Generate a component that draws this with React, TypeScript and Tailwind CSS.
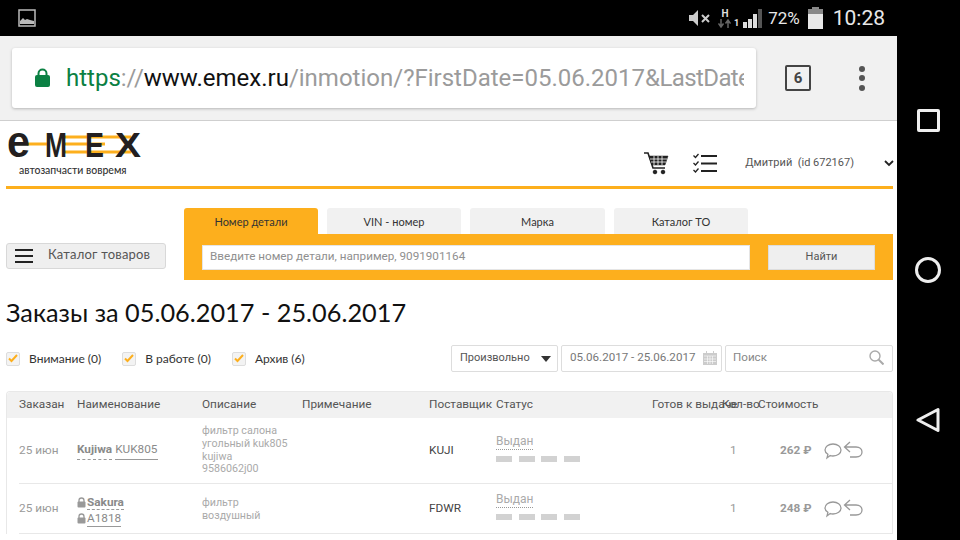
const roboto = "font-['Roboto','Liberation_Sans',sans-serif]";
const gill = "font-['Lato','Noto_Sans',sans-serif]";
const cols = 'grid grid-cols-[58px_125px_100px_127px_67px_156px_70px_36px_135px]';

const orders = [
	{ supplier: 'KUJI', price: '262 ₽', h: 'h-[66px]' },
	{ supplier: 'FDWR', price: '248 ₽', h: 'h-[50px]' },
];

const Logo = () => (
	<div className="relative h-[52px] w-[136px]">
		<svg width="136" height="28" viewBox="0 0 136 28" className="block overflow-visible">
			<g fill="#fdaf1d">
				<rect x="20" y="10.500" width="20" height="3" />
				<rect x="58" y="3.500" width="66" height="3" />
				<rect x="58" y="10.500" width="40" height="3" />
				<rect x="58" y="18.500" width="66" height="3" />
			</g>
			<g fill="#231f20" fontFamily="'Liberation Sans', sans-serif" fontWeight="700">
				<text x="0" y="25" fontSize="44" textLength="23" lengthAdjust="spacingAndGlyphs">e</text>
				<text x="38" y="25" fontSize="35" textLength="22" lengthAdjust="spacingAndGlyphs">M</text>
				<text x="78" y="25" fontSize="35" textLength="19" lengthAdjust="spacingAndGlyphs">E</text>
				<text x="108" y="25" fontSize="35" textLength="26" lengthAdjust="spacingAndGlyphs">X</text>
			</g>
		</svg>
		<div className={`${gill} mt-[3px] ml-[12px] text-[10.500px] leading-[14px] font-medium text-[#333]`}>автозапчасти вовремя</div>
	</div>
);

const Cart = () => (
	<svg width="26" height="24" viewBox="0 0 26 24" fill="none" stroke="#222">
		<path d="M1 2h4l5 15h12" strokeWidth="1.600" />
		<path d="M6 5h19l-3 9H9z" fill="#222" strokeWidth="0.500" />
		<path d="M7 8h17M8 11h15M11 5v9M15 5v9M19 5v9" stroke="#fff" strokeWidth="0.800" />
		<circle cx="12" cy="21" r="1.800" fill="#222" />
		<circle cx="20" cy="21" r="1.800" fill="#222" />
	</svg>
);

const CheckList = () => (
	<svg width="25" height="20" viewBox="0 0 25 20" fill="none" stroke="#222" strokeWidth="2">
		<path d="M0.500 2.500l2 2 3-3.500M0.500 10l2 2 3-3.500M0.500 17l2 2 3-3.500" strokeWidth="1.300" />
		<path d="M8 3h16M8 10.500h16M8 18h16" />
	</svg>
);

const CheckBox = ({ label, gap }: { label: string; gap: string }) => (
	<div className={`flex items-center ${gap}`}>
		<div className="flex h-[14px] w-[14px] items-center justify-center rounded-[2px] border border-[#ddd] bg-[#f3f3f3]">
			<svg width="10" height="9" viewBox="0 0 10 9" fill="none" stroke="#fdaf1d" strokeWidth="2">
				<path d="M1 4.500l2.500 2.500L9 1" />
			</svg>
		</div>
		<span className={`${gill} ml-[9px] text-[12px] leading-4 text-[#333]`}>{label}</span>
	</div>
);

const Lock = () => (
	<svg width="9" height="11" viewBox="0 0 9 11" className="mr-[1px] shrink-0">
		<path d="M2 5V3.500a2.500 2.500 0 0 1 5 0V5" fill="none" stroke="#999" strokeWidth="1.300" />
		<rect x="0.500" y="4.500" width="8" height="6" rx="1" fill="#999" />
	</svg>
);

const Row = ({ order, index }: { order: (typeof orders)[number]; index: number }) => (
	<div className={`${cols} ${order.h} items-center border-b border-[#e8e8e8] text-[11.800px] text-[#9a9a9a]`}>
		<div>25 июн</div>
		{index === 0 ? (
			<div className="flex gap-[3px] text-[#8a8a8a]">
				<span className="border-b border-dashed border-[#999] font-bold">Kujiwa</span>
				<span className="border-b border-[#999]">KUK805</span>
			</div>
		) : (
			<div className="pt-[4px] text-[#8a8a8a]">
				<div className="flex items-center leading-[14px]">
					<Lock />
					<span className="border-b border-dashed border-[#999] font-bold">Sakura</span>
				</div>
				<div className="mt-[1px] flex items-center leading-[15px]">
					<Lock />
					<span className="border-b border-[#999]">A1818</span>
				</div>
			</div>
		)}
		{index === 0 ? (
			<div className="text-[10.700px] leading-[12.700px] text-[#aaa]">
				фильтр салона
				<br />
				угольный kuk805
				<br />
				kujiwa
				<br />
				9586062j00
			</div>
		) : (
			<div className="text-[10.700px] leading-[13px] text-[#aaa]">
				фильтр
				<br />
				воздушный
			</div>
		)}
		<div />
		<div className="text-[#444]">{order.supplier}</div>
		<div className="mb-[5px]">
			<div className="w-fit border-b border-dotted border-[#999] text-[12px] leading-[15px] text-[#aaa]">Выдан</div>
			<div className="mt-[6px] flex gap-[6.500px]">
				<div className="h-[6px] w-[16px] bg-[#d2d2d2]" />
				<div className="h-[6px] w-[16px] bg-[#d2d2d2]" />
				<div className="h-[6px] w-[16px] bg-[#d2d2d2]" />
				<div className="h-[6px] w-[16px] bg-[#d2d2d2]" />
			</div>
		</div>
		<div />
		<div className="pl-[8px]">1</div>
		<div className="flex items-center pl-[22px]">
			<span className="w-[44px] font-bold text-[#999]">{order.price}</span>
			<svg width="40" height="20" viewBox="0 0 40 20" fill="none" stroke="#999" strokeWidth="1.300">
				<path d="M9 3c4.500 0 8 2.500 8 6s-3.500 6-8 6c-1 0-2-.1-2.800-.4L3 17l.9-3.700C2.200 12.200 1 10.700 1 9c0-3.500 3.500-6 8-6z" />
				<path d="M26 1l-5.500 5 5.500 5M20.500 6H32c4 0 6 2.500 6 5s-2 5-6 5h-6" />
			</svg>
		</div>
	</div>
);

export default function App() {
	return (
		<div className={`${roboto} flex h-[540px] w-[960px] overflow-hidden bg-black`}>
			<div className="flex w-[897px] flex-col">
				{/* status bar */}
				<div className="flex h-[36px] shrink-0 items-center bg-black">
					<svg width="18" height="18" viewBox="0 0 18 18" className="ml-[18px]" fill="none">
						<rect x="1" y="1" width="16" height="16" stroke="#bbb" strokeWidth="1.500" />
						<path d="M2 15v-3l3-3 2 2 2-1 3 1 4 1v3z" fill="#bbb" />
					</svg>
					<div className="ml-auto flex items-center pr-[12px] text-[#e8e8e8]">
						<svg width="23" height="18" viewBox="0 0 23 18" fill="#ccc">
							<path d="M0 6h4l5-5v16l-5-5H0z" />
							<path d="M13 6l7 7M20 6l-7 7" stroke="#ccc" strokeWidth="2" />
						</svg>
						<div className="ml-[6px] flex w-[14px] flex-col items-center">
							<span className="text-[10px] leading-[11px] font-bold text-[#ddd]">H</span>
							<svg width="13" height="9" viewBox="0 0 13 9" fill="none" stroke="#666" strokeWidth="1.500">
								<path d="M3 0v7M0.500 4.500L3 8l2.500-3.500M10 9V2M7.500 4.500L10 1l2.500 3.500" />
							</svg>
						</div>
						<span className="mt-[11px] ml-[2px] text-[9px] leading-[9px] font-bold">1</span>
						<svg width="20" height="21" viewBox="0 0 20 21" className="ml-[4px]">
							<rect x="0" y="14" width="4" height="6" fill="#ddd" />
							<rect x="5" y="11" width="4" height="9" fill="#ddd" />
							<rect x="10" y="6" width="4" height="14" fill="#ddd" />
							<rect x="15" y="1" width="4" height="19" fill="#555" />
						</svg>
						<span className="ml-[5px] text-[17px] leading-5">72%</span>
						<svg width="15" height="22" viewBox="0 0 15 22" className="ml-[8px]">
							<rect x="4" y="0" width="7" height="3" fill="#888" />
							<rect x="0" y="2" width="15" height="5" fill="#888" />
							<rect x="0" y="7" width="15" height="15" fill="#e8e8e8" />
						</svg>
						<span className="ml-[10px] text-[21px] leading-6">10:28</span>
					</div>
				</div>

				{/* browser toolbar */}
				<div className="flex h-[85px] shrink-0 items-center border-b border-[#cfcfcf] bg-[#f1f1f1] pl-[12px]">
					<div className="flex h-[60px] w-[744px] items-center rounded-[3px] bg-white pr-[12px] pl-[23px] shadow-[0_1px_3px_rgba(0,0,0,0.25)]">
						<svg width="15" height="20" viewBox="0 0 15 20" className="shrink-0">
							<path d="M3.500 8V5.500a4 4 0 0 1 8 0V8" fill="none" stroke="#0b8043" strokeWidth="2" />
							<rect x="0" y="7" width="15" height="12" rx="2" fill="#0b8043" />
						</svg>
						<div className="ml-[16px] overflow-hidden text-[24px] leading-7 whitespace-nowrap text-[#9b9b9b]">
							<span className="text-[#0b8043]">https</span>://<span className="text-[#111]">www.emex.ru</span>
							/inmotion/?FirstDate=05.06.2017<span className="tracking-[-0.600px]">&amp;LastDate</span>
						</div>
					</div>
					<div className="ml-[29px] flex h-[26px] w-[26px] items-center justify-center rounded-[2px] border-2 border-[#444] text-[15px] font-bold text-[#444]">
						6
					</div>
					<div className="ml-[48px] flex flex-col gap-[3.500px]">
						<div className="h-[6px] w-[6px] rounded-full bg-[#555]" />
						<div className="h-[6px] w-[6px] rounded-full bg-[#555]" />
						<div className="h-[6px] w-[6px] rounded-full bg-[#555]" />
					</div>
				</div>

				{/* page */}
				<div className="flex-1 overflow-hidden bg-white pr-[4px] pl-[6px]">
					<div className="flex h-[68px] border-b-[3px] border-[#fdaf1d]">
						<div className="pt-[11px] pl-[1px]">
							<Logo />
						</div>
						<div className="ml-auto flex items-center pt-[19px]">
							<Cart />
							<div className="ml-[24px]">
								<CheckList />
							</div>
							<span className="ml-[27px] text-[11px] text-[#555]">Дмитрий&nbsp;&nbsp;(id 672167)</span>
							<svg width="10" height="7" viewBox="0 0 10 7" className="mr-[-1px] ml-[30px]" fill="none" stroke="#222" strokeWidth="1.800">
								<path d="M1 1l4 4 4-4" />
							</svg>
						</div>
					</div>

					<div className="flex items-end pt-[19px]">
						<div className="mb-[11px] flex h-[26px] w-[160px] items-center rounded-[3px] border border-[#d8d8d8] bg-[#efefef] pl-[8px]">
							<div className="flex w-[18px] flex-col gap-[4px]">
								<div className="h-[2px] bg-[#222]" />
								<div className="h-[2px] bg-[#222]" />
								<div className="h-[2px] bg-[#222]" />
							</div>
							<span className={`${gill} ml-[15px] pb-[2px] text-[13px] tracking-[0.2px] text-[#555]`}>Каталог товаров</span>
						</div>
						<div className="ml-[18px] flex-1">
							<div className={`${gill} flex gap-[9px] text-[11px] text-[#333]`}>
								<div className="flex h-[26px] w-[134px] items-center justify-center rounded-t-[3px] bg-[#fdaf1d] pt-[3px]">Номер детали</div>
								<div className="flex h-[26px] w-[134px] items-center justify-center rounded-t-[3px] bg-[#f1f1f1] pt-[3px]">VIN - номер</div>
								<div className="flex h-[26px] w-[135px] items-center justify-center rounded-t-[3px] bg-[#f1f1f1] pt-[3px]">Марка</div>
								<div className="flex h-[26px] w-[134px] items-center justify-center rounded-t-[3px] bg-[#f1f1f1] pt-[3px]">Каталог ТО</div>
							</div>
							<div className="flex h-[46px] items-center bg-[#fdaf1d] pl-[18px]">
								<div className="flex h-[25px] w-[548px] items-center border border-[#e5e5e5] bg-white pl-[7px] text-[11.700px] text-[#8f8f8f]">
									Введите номер детали, например, 9091901164
								</div>
								<div className="ml-[18px] flex h-[25px] w-[107px] items-center justify-center border border-[#ddd] bg-[#efefef] text-[11px] text-[#555]">
									Найти
								</div>
							</div>
						</div>
					</div>

					<h1 className={`${gill} mt-[15px] text-[25.300px] leading-[34px] font-normal text-[#111]`}>Заказы за 05.06.2017 - 25.06.2017</h1>

					<div className="mt-[16px] flex h-[27px] items-center">
						<CheckBox label="Внимание (0)" gap="mr-[21px]" />
						<CheckBox label="В работе (0)" gap="mr-[21px]" />
						<CheckBox label="Архив (6)" gap="" />
						<div className="ml-auto flex gap-[3px] text-[11.600px]">
							<div className="flex h-[27px] w-[107px] items-center justify-between rounded-[2px] border border-[#ddd] pr-[6px] pl-[8px] text-[11px] text-[#555]">
								Произвольно
								<div className="h-0 w-0 border-x-[5px] border-t-[6px] border-x-transparent border-t-[#333]" />
							</div>
							<div className="flex h-[27px] w-[161px] items-center justify-between rounded-[2px] border border-[#ddd] pr-[4px] pb-[2px] pl-[8px] text-[#777]">
								05.06.2017 - 25.06.2017
								<svg width="14" height="14" viewBox="0 0 14 14" fill="#ccc">
									<path d="M3 0h1v2H3zM10 0h1v2h-1zM0 2h14v12H0z" />
									<path d="M1 5h12M4.500 5v8M7 5v8M9.500 5v8M1 8h12M1 10.500h12" stroke="#fff" strokeWidth="0.600" />
								</svg>
							</div>
							<div className="flex h-[27px] w-[168px] items-center justify-between rounded-[2px] border border-[#ddd] pr-[8px] pb-[2px] pl-[7px] text-[#888]">
								Поиск
								<svg width="15" height="15" viewBox="0 0 15 15" fill="none" stroke="#aaa" strokeWidth="1.400">
									<circle cx="6" cy="6" r="5" />
									<path d="M9.500 9.500l5 5" strokeWidth="2" />
								</svg>
							</div>
						</div>
					</div>

					<div className="mt-[19px] rounded-t-[4px] border-x border-t border-[#e8e8e8]">
						<div className={`${cols} h-[26px] items-center rounded-t-[4px] bg-[#f1f1f1] pl-[12px] text-[11.800px] whitespace-nowrap text-[#555]`}>
							<div>Заказан</div>
							<div>Наименование</div>
							<div>Описание</div>
							<div>Примечание</div>
							<div>Поставщик</div>
							<div>Статус</div>
							<div>Готов к выдаче</div>
							<div>Кол-во</div>
							<div>Стоимость</div>
						</div>
						<div className="pl-[12px]">
							{orders.map((order, i) => (
								<Row key={order.supplier} order={order} index={i} />
							))}
						</div>
					</div>
				</div>
			</div>

			{/* android nav */}
			<div className="grid w-[63px] grid-rows-[150px_150px_150px] justify-items-center pt-[45px] pr-[1px]">
				<div className="flex items-center">
					<div className="h-[23px] w-[23px] rounded-[2px] border-[3px] border-[#eee]" />
				</div>
				<div className="flex items-center">
					<div className="h-[26px] w-[26px] rounded-full border-[3px] border-[#eee]" />
				</div>
				<div className="flex items-center">
					<svg width="24" height="26" viewBox="0 0 24 26" fill="none" stroke="#eee" strokeWidth="3" strokeLinejoin="round">
						<path d="M22 2.500v21L2 13z" />
					</svg>
				</div>
			</div>
		</div>
	);
}
